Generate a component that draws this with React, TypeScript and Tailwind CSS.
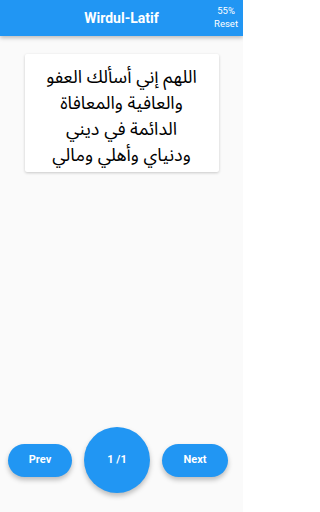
const lines = [
  "اللهم إني أسألك العفو",
  "والعافية والمعافاة",
  "الدائمة في ديني",
  "ودنياي وأهلي ومالي",
];

export default function App() {
  return (
    <div className="h-[512px] w-[243px] bg-[#fafafa] flex flex-col font-['Roboto',sans-serif] overflow-hidden">
      {/* HEADER */}
      <header className="relative h-9 bg-[#2196f3] flex items-center justify-center shadow-[0_2px_4px_rgba(0,0,0,0.25)] text-white">
        <h1 className="text-[14px] font-bold">Wirdul-Latif</h1>
        <div className="absolute right-[5px] top-[4px] flex flex-col items-center text-[9.5px] leading-[13px]">
          <span>55%</span>
          <span>Reset</span>
        </div>
      </header>

      {/* CARD */}
      <div className="flex justify-center mt-[18px]">
        <div className="w-[194px] bg-white rounded-[2px] shadow-[0_1px_3px_rgba(0,0,0,0.2)] pt-[10px] pb-[4px]">
          {lines.map((l) => (
            <p key={l} dir="rtl" className="text-center whitespace-nowrap text-[18px] leading-[26px] text-black font-['Noto_Sans_Arabic','Noto_Sans','DejaVu_Sans',sans-serif]">
              {l}
            </p>
          ))}
        </div>
      </div>

      {/* NAV */}
      <div className="mt-auto mb-[19px] flex items-center pl-2 gap-3">
        <button className="w-16 h-[33px] rounded-full bg-[#2196f3] text-white text-[11px] font-bold shadow-[0_3px_5px_rgba(0,0,0,0.25)]">
          Prev
        </button>
        <button className="w-[66px] h-[66px] rounded-full bg-[#2196f3] text-white text-[11px] font-bold shadow-[0_3px_5px_rgba(0,0,0,0.25)]">
          1 /1
        </button>
        <button className="w-[66px] h-[33px] rounded-full bg-[#2196f3] text-white text-[11px] font-bold shadow-[0_3px_5px_rgba(0,0,0,0.25)]">
          Next
        </button>
      </div>
    </div>
  );
}
